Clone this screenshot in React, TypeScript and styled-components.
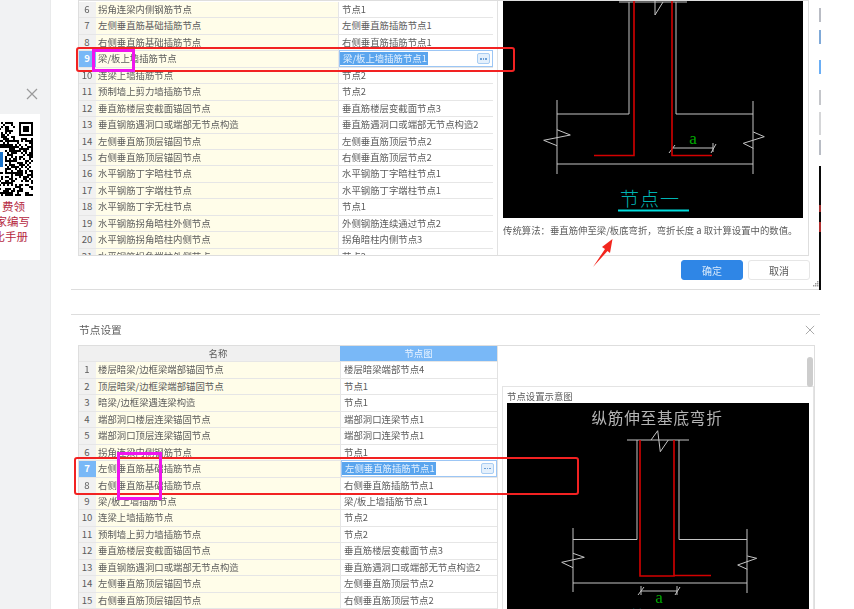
import * as React from 'react'
import styled, { createGlobalStyle } from 'styled-components'

type NodeRow = [number, string, string]

const ROWS: NodeRow[] = [
  [1, '楼层暗梁/边框梁端部锚固节点', '楼层暗梁端部节点4'],
  [2, '顶层暗梁/边框梁端部锚固节点', '节点1'],
  [3, '暗梁/边框梁遇连梁构造', '节点1'],
  [4, '端部洞口楼层连梁锚固节点', '端部洞口连梁节点1'],
  [5, '端部洞口顶层连梁锚固节点', '端部洞口连梁节点1'],
  [6, '拐角连梁内侧钢筋节点', '节点1'],
  [7, '左侧垂直筋基础插筋节点', '左侧垂直筋插筋节点1'],
  [8, '右侧垂直筋基础插筋节点', '右侧垂直筋插筋节点1'],
  [9, '梁/板上墙插筋节点', '梁/板上墙插筋节点1'],
  [10, '连梁上墙插筋节点', '节点2'],
  [11, '预制墙上剪力墙插筋节点', '节点2'],
  [12, '垂直筋楼层变截面锚固节点', '垂直筋楼层变截面节点3'],
  [13, '垂直钢筋遇洞口或端部无节点构造', '垂直筋遇洞口或端部无节点构造2'],
  [14, '左侧垂直筋顶层锚固节点', '左侧垂直筋顶层节点2'],
  [15, '右侧垂直筋顶层锚固节点', '右侧垂直筋顶层节点2'],
  [16, '水平钢筋丁字暗柱节点', '水平钢筋丁字暗柱节点1'],
  [17, '水平钢筋丁字端柱节点', '水平钢筋丁字端柱节点1'],
  [18, '水平钢筋丁字无柱节点', '节点1'],
  [19, '水平钢筋拐角暗柱外侧节点', '外侧钢筋连续通过节点2'],
  [20, '水平钢筋拐角暗柱内侧节点', '拐角暗柱内侧节点3'],
  [21, '水平钢筋拐角端柱外侧节点', '节点2'],
]

const GlobalStyle = createGlobalStyle`
  html, body {
    margin: 0;
    padding: 0;
    background: #fff;
  }
  body {
    font-family: "Noto Sans CJK SC", "Liberation Sans", sans-serif;
    color: #5c5c5c;
  }
`

const Page = styled.div`
  display: grid;
  grid-template-columns: 51px 1fr;
  width: 854px;
  height: 609px;
  overflow: hidden;
  filter: blur(0.5px);
`

const Sidebar = styled.aside`
  display: flex;
  flex-direction: column;
  align-items: flex-start;
  background: #f1f2f3;
  border-right: 1px solid #e9eaeb;
  padding-top: 88px;
  box-sizing: border-box;
`

const SideClose = styled.svg`
  width: 12px;
  height: 12px;
  margin-left: 26px;
  margin-bottom: 14px;
`

const PromoCard = styled.div`
  width: 40px;
  height: 146px;
  background: #fff;
  padding-top: 8px;
  box-sizing: border-box;
  overflow: hidden;
`

const QrCode = styled.svg`
  display: block;
  width: 33px;
  height: 74px;
  margin-bottom: 3px;
`

const PromoLine = styled.div<{ $shift: number }>`
  margin-left: ${p => p.$shift}px;
  width: 60px;
  height: 15px;
  line-height: 15px;
  font-size: 11.5px;
  color: #b5283f;
  white-space: nowrap;
`

const Main = styled.main`
  display: flex;
  flex-direction: column;
  padding-left: 20px;
  width: 751px;
  box-sizing: border-box;
`

const TopPanel = styled.section`
  position: relative;
  display: flex;
  flex-direction: column;
  flex: none;
  width: 749px;
  height: 290px;
  padding-left: 7px;
  box-sizing: border-box;
  border-bottom: 1px solid #ddd;
`

const BottomPanel = styled.section`
  position: relative;
  flex: none;
  width: 749px;
  height: 295px;
  margin-top: 24px;
  padding-left: 7px;
  box-sizing: border-box;
  border-top: 1px solid #ddd;
  overflow: hidden;
`

const EdgeStrip = styled.div`
  position: absolute;
  top: 0;
  right: -1px;
  width: 2px;
  height: 290px;
  background: linear-gradient(
    to bottom,
    #fff 0 8px, #b9bcc4 8px 22px, #fff 22px 30px, #7fa9d8 30px 44px,
    #fff 44px 60px, #6aaef5 60px 74px, #fff 74px 90px, #c4c6ca 90px 105px,
    #fff 105px 112px, #d5d6d8 112px 135px, #fff 135px 140px, #b8bcc4 140px 155px,
    #fff 155px 166px, #0a0a0a 166px 205px, #a03030 205px 212px, #0a0a0a 212px 222px,
    #b03030 222px 232px, #0a0a0a 232px 290px
  );
`

const Frame = styled.div<{ $width: number; $height: number }>`
  display: flex;
  flex: none;
  width: ${p => p.$width}px;
  height: ${p => p.$height}px;
  box-sizing: border-box;
  border: 1px solid #dedede;
  overflow: hidden;
`

const TableArea = styled.div<{ $top: number; $width: number }>`
  flex: none;
  width: 420px;
  padding-top: ${p => p.$top}px;
  padding-right: ${p => 420 - p.$width}px;
  box-sizing: border-box;
  border-right: 1px solid #e2e2e2;
  margin-top: -1px;
  margin-left: -1px;
`

const RowLine = styled.div<{ $name: number }>`
  display: grid;
  grid-template-columns: 18px ${p => p.$name}px 1fr;
  height: 16.45px;
  box-sizing: border-box;
  border-bottom: 1px solid #e6e6e6;
  font-size: 9.4px;
  line-height: 15px;
  white-space: nowrap;
`

const IndexCell = styled.div<{ $active?: boolean }>`
  text-align: center;
  font-size: 9.6px;
  background: ${p => (p.$active ? '#79b8f7' : '#f1f1f1')};
  color: ${p => (p.$active ? '#fff' : '#5c5c5c')};
  font-weight: ${p => (p.$active ? 700 : 400)};
`

const NameCell = styled.div`
  background: #fffde9;
  padding-left: 2px;
  overflow: hidden;
`

const NodeCell = styled.div<{ $editing?: boolean }>`
  background: #fff;
  padding-left: ${p => (p.$editing ? 0 : 3)}px;
  overflow: ${p => (p.$editing ? 'visible' : 'hidden')};
  border-left: 1px solid #e6e6e6;
`

const HeadCell = styled.div<{ $blue?: boolean }>`
  text-align: center;
  background: ${p => (p.$blue ? '#79b8f7' : '#f0f0f0')};
  color: ${p => (p.$blue ? '#e8f3ff' : '#5c5c5c')};
`

const EditBox = styled.div`
  display: flex;
  align-items: center;
  justify-content: space-between;
  height: 17px;
  margin-top: -1px;
  padding-right: 2px;
  box-sizing: border-box;
  border: 1px solid #9cc6f5;
  background: #fff;
`

const Selected = styled.span`
  display: block;
  height: 13px;
  line-height: 13px;
  padding: 0 1px 0 3px;
  background: #5aa5ee;
  color: #e4f0fd;
`

const MoreButton = styled.span`
  display: flex;
  align-items: center;
  justify-content: center;
  gap: 1.2px;
  width: 13px;
  height: 11px;
  box-sizing: border-box;
  border: 1px solid #a9cdf3;
  border-radius: 2px;
  background: #e4f0fc;
`

const MoreDot = styled.i`
  display: block;
  width: 1.5px;
  height: 1.5px;
  background: #6c9fd6;
`

const SidePanel = styled.div<{ $left: number; $right: number; $lift: number }>`
  flex: 1;
  padding: 0 ${p => p.$right}px 0 ${p => p.$left}px;
  margin-top: -${p => p.$lift}px;
  min-width: 0;
`

const Caption = styled.p`
  margin: 4px 0 0;
  font-size: 9.4px;
  line-height: 16px;
  white-space: nowrap;
`

const Drawing = styled.svg<{ $h: number; $w: number }>`
  display: block;
  width: ${p => p.$w}px;
  height: ${p => p.$h}px;
  background: #000;
`

const ButtonBar = styled.div`
  display: flex;
  justify-content: flex-end;
  gap: 5px;
  width: 732px;
  padding-top: 4px;
  box-sizing: border-box;
`

const DialogButton = styled.div<{ $primary?: boolean }>`
  width: 62px;
  height: 20px;
  line-height: 19px;
  text-align: center;
  font-size: 10px;
  border-radius: 3px;
  box-sizing: border-box;
  background: ${p => (p.$primary ? '#2f86e6' : '#fff')};
  color: ${p => (p.$primary ? '#d6e8fb' : '#5c5c5c')};
  border: 1px solid ${p => (p.$primary ? '#2f86e6' : '#e6e6e6')};
`

const ResizeGrip = styled.svg`
  position: absolute;
  right: 1px;
  bottom: 2px;
  width: 7px;
  height: 7px;
`

const TitleRow = styled.div`
  display: flex;
  align-items: center;
  justify-content: space-between;
  height: 31px;
  font-size: 10.7px;
  padding-right: 5px;
  padding-left: 1px;
  margin-top: -1px;
`

const TitleClose = styled.svg`
  width: 10px;
  height: 10px;
`

const ScrollThumb = styled.div`
  position: absolute;
  top: 42px;
  left: 736px;
  width: 6px;
  height: 30px;
  border-radius: 3px;
  background: #cdcdcd;
`

const GroupBox = styled.div`
  margin-top: 40px;
  padding: 2px 0 0 4px;
  border: 1px solid #e4e4e4;
  border-bottom: 0;
`

const GroupTitle = styled.div`
  font-size: 9.4px;
  line-height: 14px;
  white-space: nowrap;
`

const Mark = styled.div<{ $x: number; $y: number; $w: number; $h: number; $color: string; $line: number; $round: number }>`
  position: absolute;
  left: ${p => p.$x}px;
  top: ${p => p.$y}px;
  width: ${p => p.$w}px;
  height: ${p => p.$h}px;
  box-sizing: border-box;
  border: ${p => p.$line}px solid ${p => p.$color};
  border-radius: ${p => p.$round}px;
`

const ArrowMark = styled.svg`
  position: absolute;
  left: 520px;
  top: 236px;
  width: 24px;
  height: 34px;
`

const seedBits = () => {
  // fake modules, only has to look like a qr code
  let s = 7
  const out: [number, number][] = []
  for (let y = 0; y < 37; y++) {
    for (let x = 0; x < 17; x++) {
      s = (s * 1103515245 + 12345) & 0x7fffffff
      const inFinder = x >= 8 && y <= 7
      const inLogo = x <= 2 && y >= 14 && y <= 24
      if (!inFinder && !inLogo && (s >> 16) % 100 < 52) out.push([x, y])
    }
  }
  return out
}

const QR_BITS = seedBits()

const CloseIcon = ({ color }: { color: string }) => (
  <path d="M1 1 L11 11 M11 1 L1 11" stroke={color} strokeWidth="1.2" fill="none" />
)

const Table = ({ rows, name, width, active, top, head }: {
  rows: NodeRow[]; name: number; width: number; active: number; top: number; head?: boolean
}) => (
  <TableArea $top={top} $width={width}>
    {head && (
      <RowLine $name={name}>
        <HeadCell />
        <HeadCell>名称</HeadCell>
        <HeadCell $blue>节点图</HeadCell>
      </RowLine>
    )}
    {rows.map(([no, label, node]) => (
      <RowLine key={no} $name={name}>
        <IndexCell $active={no === active}>{no}</IndexCell>
        <NameCell>{label}</NameCell>
        <NodeCell $editing={no === active}>
          {no === active ? (
            <EditBox>
              <Selected>{node}</Selected>
              <MoreButton><MoreDot /><MoreDot /><MoreDot /></MoreButton>
            </EditBox>
          ) : node}
        </NodeCell>
      </RowLine>
    ))}
  </TableArea>
)

const wire = { stroke: '#c4c4c4', strokeWidth: 1, fill: 'none' }
const rebar = { stroke: '#d40000', strokeWidth: 1.6, fill: 'none' }

const TopDrawing = () => (
  <Drawing $w={300} $h={218} viewBox="503 0 300 218">
    <g {...wire}>
      <path d="M619 2 H687" />
      <path d="M629 2 V114 H557 M676 2 V114 H753" />
      <path d="M557 100 V174 M753 101 V174 M557 164 H753" />
      <path d="M557 145.7 L543.7 140.3 L570.3 135 L557 129.7" />
      <path d="M753.3 148.3 L743.3 143.3 L764.3 136.7 L753.3 132" />
      <path d="M655 1 V15 L663 2" />
      <path d="M672 148 H713 M669 153 L675 145 M711 153 L716 144 M713 143 V152" />
    </g>
    <path {...rebar} d="M634 0 V155.5 H594 M672 0 V155.5 H712" />
    <text x="693" y="143.5" fontSize="17" fill="#00a800" textAnchor="middle" fontFamily="'Liberation Serif', serif">a</text>
    <text x="650" y="206" fontSize="19" fill="#00b4b4" textAnchor="middle" fontWeight="300" letterSpacing="1" fontFamily="'Noto Sans CJK SC', sans-serif">节点一</text>
    <path d="M618 210.5 H689" stroke="#00dcdc" strokeWidth="2" />
  </Drawing>
)

const BottomDrawing = () => (
  <Drawing $w={302} $h={206} viewBox="507 403 302 206">
    <text x="657" y="424" fontSize="15.6" fill="#b4b4b4" textAnchor="middle" letterSpacing="0.8" fontFamily="'Liberation Serif', 'Noto Sans CJK SC', serif">纵筋伸至基底弯折</text>
    <g {...wire}>
      <path d="M627 440 H689" />
      <path d="M637 440 V539.5 H573 M679 440 V539.5 H747" />
      <path d="M573 528 V592 M747 529 V593 M573 583 H747" />
      <path d="M651 440 L657.7 430.7 L660.3 451.7 L668.3 440" />
      <path d="M573 567.7 L561.7 562.3 L584.3 557.3 L573 553.3" />
      <path d="M747.3 569.3 L737.7 565 L756.7 558.3 L747.3 556" />
      <path d="M641 591 H677 M638 595 L644 587 M675 595 L680 587 M641 586 V595 M677 586 V595" />
    </g>
    <path {...rebar} d="M640 440 V576 H674 V440 M674 575.5 H711" />
    <text x="659" y="603" fontSize="17" fill="#00a800" textAnchor="middle" fontFamily="'Liberation Serif', serif">a</text>
    <text x="656" y="625" fontSize="19" fill="#00b4b4" textAnchor="middle" fontWeight="300" fontFamily="'Noto Sans CJK SC', sans-serif">节点一</text>
  </Drawing>
)

export default function App() {
  return (
    <Page>
      <GlobalStyle />
      <Sidebar>
        <SideClose viewBox="0 0 12 12"><CloseIcon color="#9a9a9a" /></SideClose>
        <PromoCard>
          <QrCode viewBox="0 0 33 74">
            {QR_BITS.map(([x, y]) => <rect key={`${x}-${y}`} x={x * 2 - 1} y={y * 2} width="2" height="2" fill="#000" />)}
            <path d="M20 1 H32 V13 H20 Z" fill="none" stroke="#000" strokeWidth="2" />
            <rect x="23" y="4" width="6" height="6" fill="#000" />
            <rect x="0" y="28" width="5" height="20" fill="#fff" />
            <rect x="0" y="30" width="3" height="15" fill="#1a73c9" />
          </QrCode>
          <PromoLine $shift={2}>费领</PromoLine>
          <PromoLine $shift={-4.5}>家编写</PromoLine>
          <PromoLine $shift={-6.5}>比手册</PromoLine>
        </PromoCard>
      </Sidebar>
      <Main>
        <TopPanel>
          <Frame $width={731} $height={256}>
            <Table rows={ROWS.slice(5, 21)} name={242} width={416} active={9} top={2} />
            <SidePanel $left={5} $right={4} $lift={1}>
              <TopDrawing />
              <Caption>传统算法：垂直筋伸至梁/板底弯折，弯折长度 a 取计算设置中的数值。</Caption>
            </SidePanel>
          </Frame>
          <ButtonBar>
            <DialogButton $primary>确定</DialogButton>
            <DialogButton>取消</DialogButton>
          </ButtonBar>
          <ResizeGrip viewBox="0 0 7 7">
            <path d="M5 1 h1.4 v1.4 h-1.4z M3 3 h1.4 v1.4 h-1.4z M5 3 h1.4 v1.4 h-1.4z M1 5 h1.4 v1.4 h-1.4z M3 5 h1.4 v1.4 h-1.4z M5 5 h1.4 v1.4 h-1.4z" fill="#999" />
          </ResizeGrip>
          <EdgeStrip />
          <Mark $x={5} $y={47} $w={439} $h={25} $color="#f22222" $line={2} $round={3} />
          <Mark $x={21} $y={49} $w={43} $h={23} $color="#f014ee" $line={3} $round={0} />
          <ArrowMark viewBox="0 0 24 34">
            <path d="M2 31 L14 13 L11 11 L21.5 3 L19 17 L16.5 15 Z" fill="#f2261e" />
          </ArrowMark>
        </TopPanel>
        <BottomPanel>
          <TitleRow>
            <span>节点设置</span>
            <TitleClose viewBox="0 0 12 12"><CloseIcon color="#aaa" /></TitleClose>
          </TitleRow>
          <Frame $width={737} $height={270}>
            <Table rows={ROWS.slice(0, 15)} name={244} width={420} active={7} top={1} head />
            <SidePanel $left={4} $right={0} $lift={0}>
              <GroupBox>
                <GroupTitle>节点设置示意图</GroupTitle>
                <BottomDrawing />
              </GroupBox>
            </SidePanel>
          </Frame>
          <ScrollThumb />
          <Mark $x={3} $y={142} $w={505} $h={38} $color="#f22222" $line={2} $round={3} />
          <Mark $x={46} $y={137} $w={45} $h={48} $color="#f014ee" $line={3} $round={0} />
        </BottomPanel>
      </Main>
    </Page>
  )
}
